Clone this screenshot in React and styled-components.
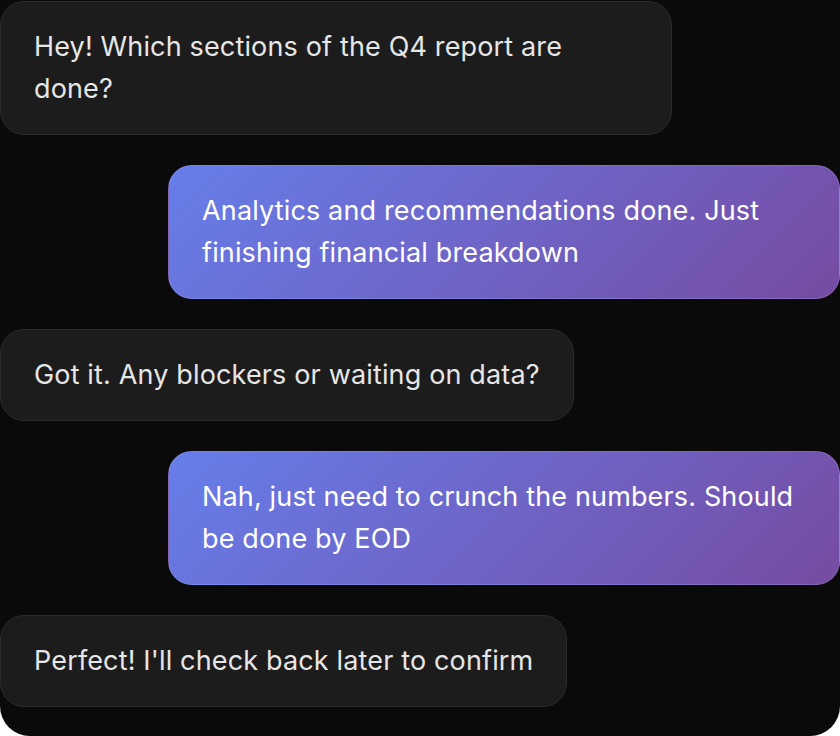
import styled, { createGlobalStyle } from 'styled-components'

const Global = createGlobalStyle`
  html, body {
    margin: 0;
    padding: 0;
    background: #ffffff;
  }
  * { box-sizing: border-box; }
`

const Thread = styled.div`
  width: 840px;
  height: 736px;
  background: #0a0a0a;
  border-radius: 0 0 30px 30px;
  padding: 1px 0 28px;
  display: flex;
  flex-direction: column;
  gap: 30px;
  overflow: hidden;
  font-family: Inter, "Noto Sans", sans-serif;
`

const Bubble = styled.div`
  max-width: 80%;
  align-self: ${p => (p.$mine ? 'flex-end' : 'flex-start')};
  padding: 24px 33px;
  border-radius: 24px;
  font-size: 27px;
  line-height: 42px;
  letter-spacing: 0.15px;
  color: ${p => (p.$mine ? '#ffffff' : '#e6e6e6')};
  background: ${p =>
    p.$mine ? 'linear-gradient(135deg, #667eea 0%, #764ba2 100%)' : '#1c1c1c'};
  border: 1px solid ${p => (p.$mine ? 'rgba(255,255,255,0.12)' : '#2c2c2c')};
`

const messages = [
  { mine: false, text: 'Hey! Which sections of the Q4 report are done?' },
  { mine: true, text: 'Analytics and recommendations done. Just finishing financial breakdown' },
  { mine: false, text: 'Got it. Any blockers or waiting on data?' },
  { mine: true, text: 'Nah, just need to crunch the numbers. Should be done by EOD' },
  { mine: false, text: "Perfect! I'll check back later to confirm" },
]

const App = () => {
  return (
    <>
      <Global />
      <Thread>
        {messages.map((m, i) => (
          <Bubble key={i} $mine={m.mine}>{m.text}</Bubble>
        ))}
      </Thread>
    </>
  )
}

export default App
